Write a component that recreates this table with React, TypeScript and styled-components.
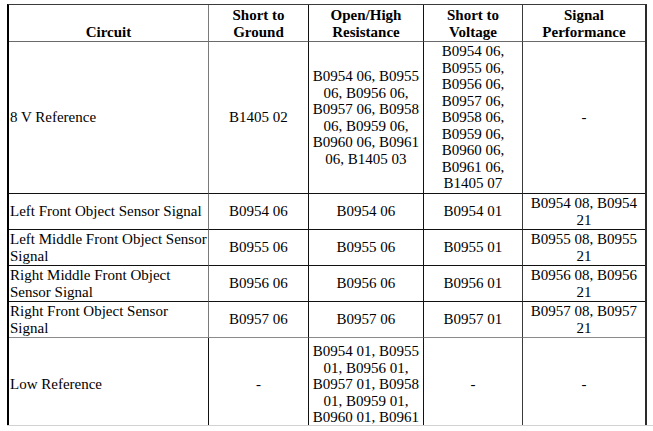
import React from "react";
import styled, { createGlobalStyle } from "styled-components";

const Global = createGlobalStyle`
  html, body { margin: 0; padding: 0; background: #fff; }
  body { font-family: "Liberation Serif", "Times New Roman", serif; color: #000; }
`;

const Page = styled.div`
  width: 653px;
  height: 431px;
  box-sizing: border-box;
  padding: 4px 0 0 7px;
  overflow: hidden;
  background: #fff;
`;

const Frame = styled.div`
  height: 421px;
  border-bottom: 1px solid #d2d2d2;
  overflow: hidden;
`;

const Table = styled.table`
  box-sizing: border-box;
  width: 640px;
  table-layout: fixed;
  border-collapse: separate;
  border-spacing: 0;
  border-top: 1px solid #3a3a3a;
  border-left: 2px solid #000;
  border-right: 2px solid #2a2a2a;
  font-family: "Liberation Serif", "Times New Roman", serif;
  font-size: 15px;
  line-height: 16.5px;
  color: #000;
`;

const Col = styled.col<{ $w: number }>`
  width: ${(p) => p.$w}px;
`;

const Row = styled.tr<{ $h: number }>`
  height: ${(p) => p.$h}px;
`;

const HeadCell = styled.th<{ $rule: string }>`
  box-sizing: border-box;
  padding: 1px;
  font-family: "Liberation Serif", "Times New Roman", serif;
  font-weight: bold;
  text-align: center;
  vertical-align: bottom;
  border-bottom: 1px solid #6a6a6a;
  border-right: 1px solid ${(p) => p.$rule};
  &:last-child { border-right: 0; }
`;

const Cell = styled.td<{ $rule: string; $bottom: string; $left?: boolean }>`
  box-sizing: border-box;
  padding: ${(p) => (p.$left ? "1px 0 1px 1px" : "1px")};
  font-family: "Liberation Serif", "Times New Roman", serif;
  text-align: ${(p) => (p.$left ? "left" : "center")};
  vertical-align: middle;
  border-bottom: 1px solid ${(p) => p.$bottom};
  border-right: 1px solid ${(p) => p.$rule};
  &:last-child { border-right: 0; }
`;

const widths = [200, 100, 115, 99, 122];
const headRules = ["#7a7a7a", "#111", "#111", "#3a3a3a", "#111"];

const headers = [
  ["Circuit"],
  ["Short to", "Ground"],
  ["Open/High", "Resistance"],
  ["Short to", "Voltage"],
  ["Signal", "Performance"],
];

type RowData = { h: number; bottom: string; firstRule: string; cells: string[] };

const rows: RowData[] = [
  {
    h: 152,
    bottom: "#111",
    firstRule: "#7a7a7a",
    cells: [
      "8 V Reference",
      "B1405 02",
      "B0954 06, B0955 06, B0956 06, B0957 06, B0958 06, B0959 06, B0960 06, B0961 06, B1405 03",
      "B0954 06, B0955 06, B0956 06, B0957 06, B0958 06, B0959 06, B0960 06, B0961 06, B1405 07",
      "-",
    ],
  },
  {
    h: 36,
    bottom: "#111",
    firstRule: "#7a7a7a",
    cells: ["Left Front Object Sensor Signal", "B0954 06", "B0954 06", "B0954 01", "B0954 08, B0954 21"],
  },
  {
    h: 36,
    bottom: "#111",
    firstRule: "#7a7a7a",
    cells: ["Left Middle Front Object Sensor Signal", "B0955 06", "B0955 06", "B0955 01", "B0955 08, B0955 21"],
  },
  {
    h: 36,
    bottom: "#111",
    firstRule: "#7a7a7a",
    cells: ["Right Middle Front Object Sensor Signal", "B0956 06", "B0956 06", "B0956 01", "B0956 08, B0956 21"],
  },
  {
    h: 36,
    bottom: "#8a8a8a",
    firstRule: "#7a7a7a",
    cells: ["Right Front Object Sensor Signal", "B0957 06", "B0957 06", "B0957 01", "B0957 08, B0957 21"],
  },
  {
    h: 94,
    bottom: "transparent",
    firstRule: "#111",
    cells: [
      "Low Reference",
      "-",
      "B0954 01, B0955 01, B0956 01, B0957 01, B0958 01, B0959 01, B0960 01, B0961",
      "-",
      "-",
    ],
  },
];

export default function App() {
  return (
    <>
      <Global />
      <Page>
        <Frame>
          <Table>
            <colgroup>
              {widths.map((w, i) => (
                <Col key={i} $w={w} />
              ))}
            </colgroup>
            <thead>
              <Row $h={37}>
                {headers.map((lines, i) => (
                  <HeadCell key={i} $rule={headRules[i]}>
                    {lines.map((l, j) => (
                      <React.Fragment key={j}>
                        {j > 0 && <br />}
                        {l}
                      </React.Fragment>
                    ))}
                  </HeadCell>
                ))}
              </Row>
            </thead>
            <tbody>
              {rows.map((r, ri) => (
                <Row key={ri} $h={r.h}>
                  {r.cells.map((c, ci) => (
                    <Cell
                      key={ci}
                      $left={ci === 0}
                      $bottom={r.bottom}
                      $rule={ci === 0 ? r.firstRule : headRules[ci]}
                    >
                      {c}
                    </Cell>
                  ))}
                </Row>
              ))}
            </tbody>
          </Table>
        </Frame>
      </Page>
    </>
  );
}
